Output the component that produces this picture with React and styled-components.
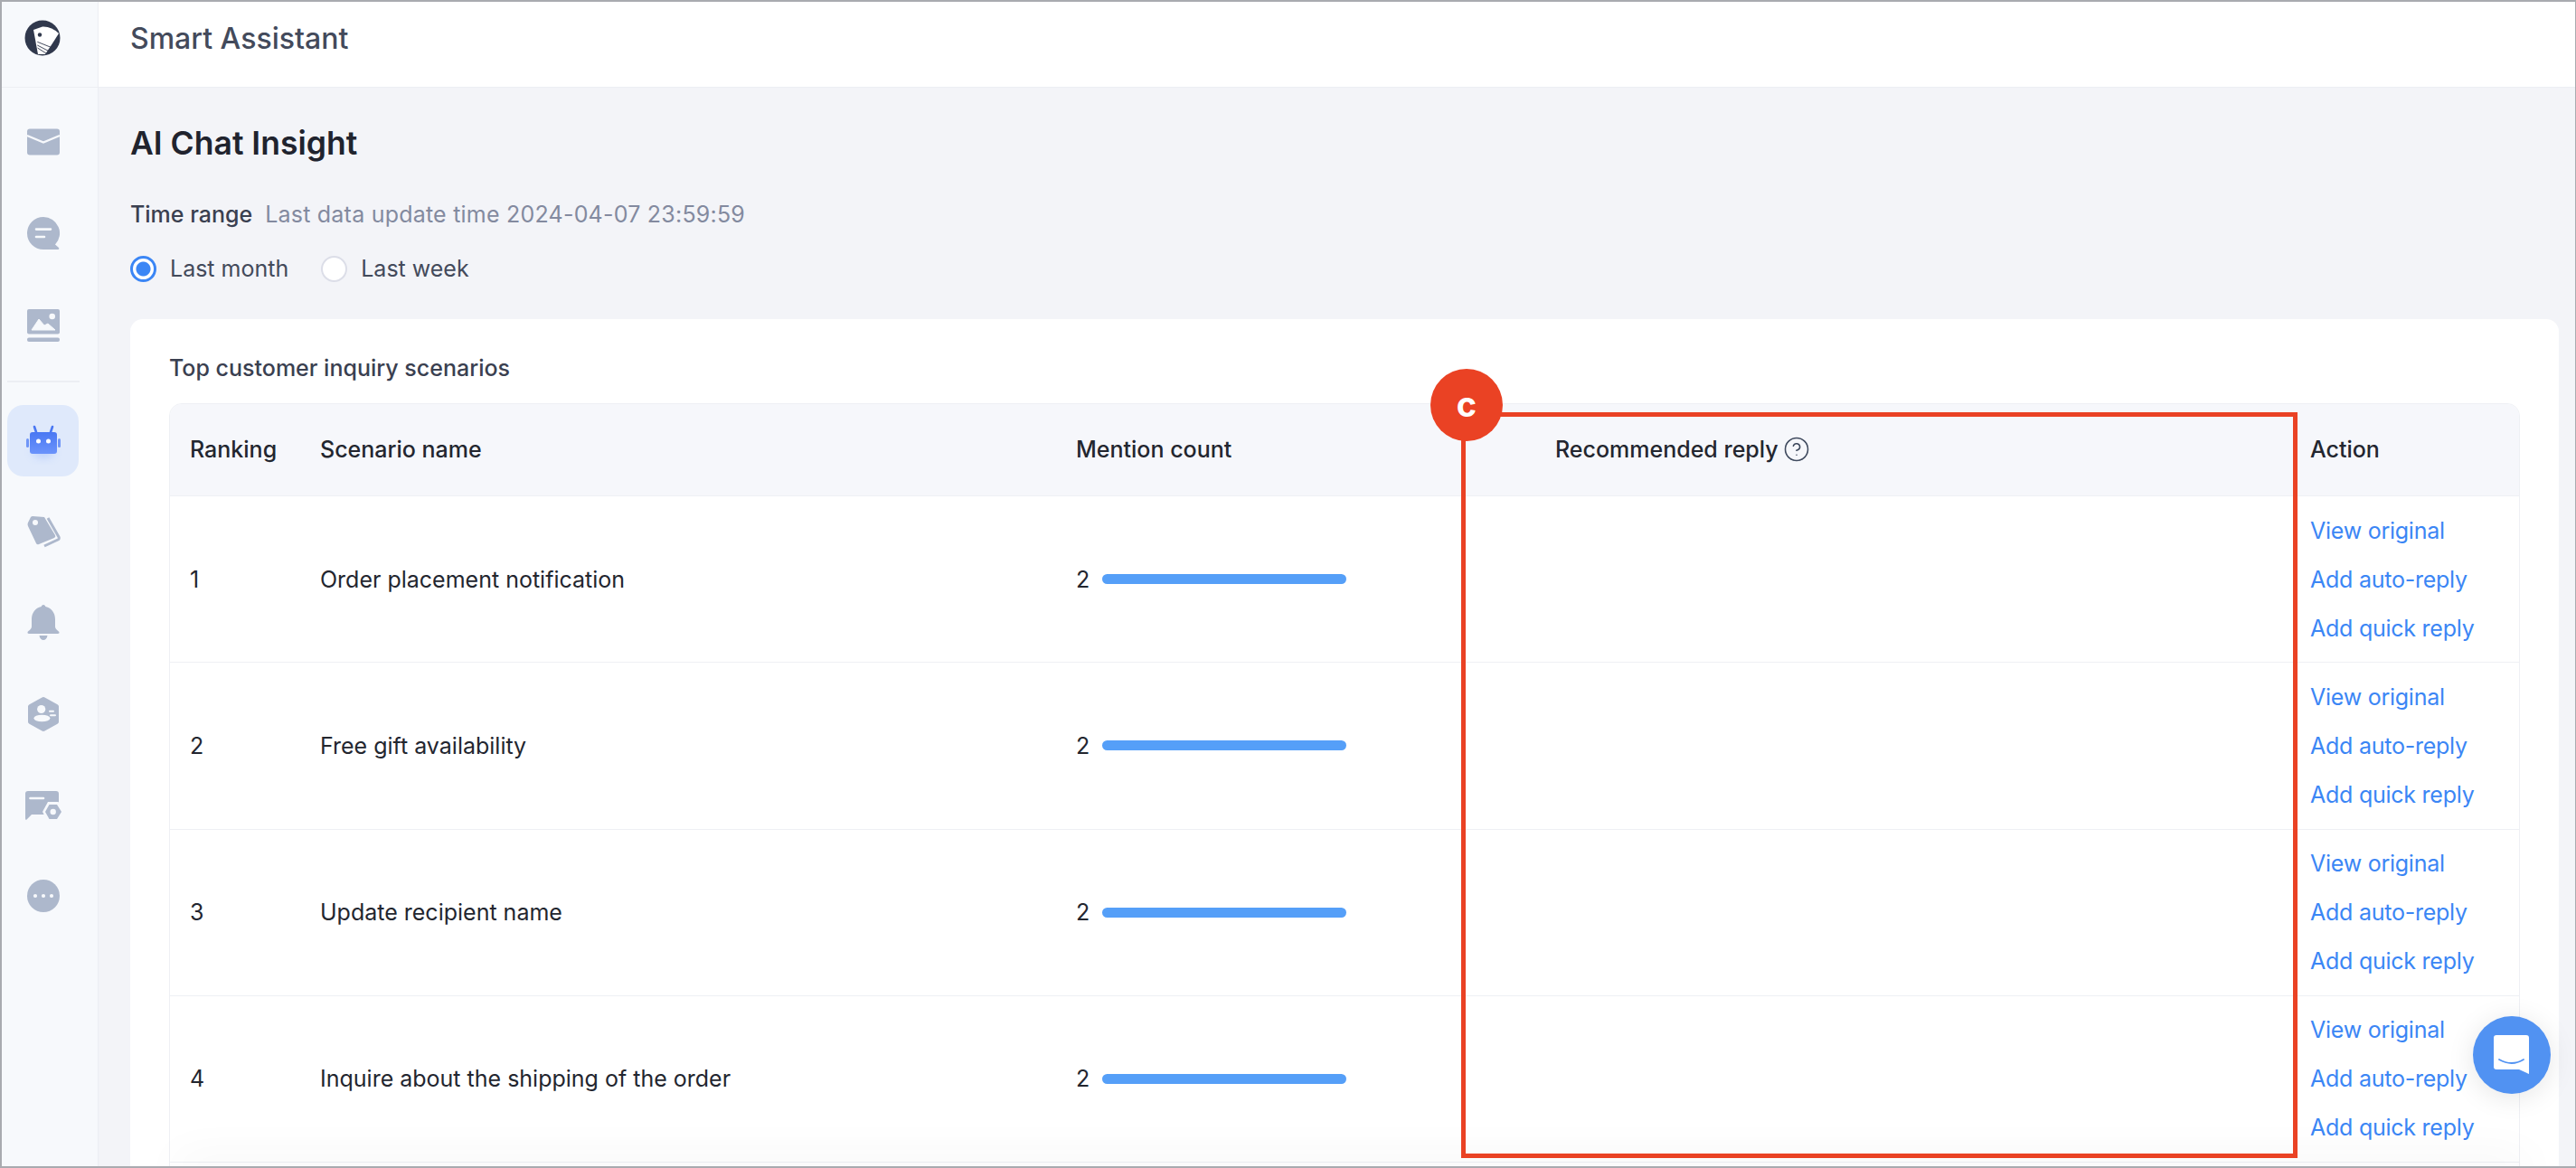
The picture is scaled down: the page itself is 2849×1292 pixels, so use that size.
import React from "react";
import styled, { createGlobalStyle } from "styled-components";
import { CircleHelp } from "lucide-react";

const Global = createGlobalStyle`
  html, body { margin: 0; padding: 0; background: #fff; }
  #root { width: 2849px; height: 1292px; overflow: hidden; }
  * { box-sizing: border-box; }
`;

const Frame = styled.div`
  position: relative;
  display: flex;
  width: 2849px;
  height: 1292px;
  overflow: hidden;
  border: solid #a9abb0;
  border-width: 2px 1px 2px 2px;
  font-family: Inter, "Noto Sans", sans-serif;
  color: #23262f;
`;

const Rail = styled.nav`
  flex: none;
  width: 107px;
  display: flex;
  flex-direction: column;
  background: #f7f9fc;
  border-right: 1px solid #eceef3;
`;

const RailLogo = styled.div`
  height: 95px;
  display: flex;
  align-items: center;
  justify-content: center;
  padding: 0 16px 14px 0;
  border-bottom: 1px solid #eceef3;
`;

const RailGroup = styled.div`
  display: flex;
  flex-direction: column;
  gap: ${(p) => p.$gap}px;
  padding: ${(p) => p.$top || 0}px 20px 0 6px;
`;

const RailItem = styled.div`
  width: 79px;
  height: 79px;
  display: flex;
  align-items: center;
  justify-content: center;
  border-radius: 18px;
  background: ${(p) => (p.$active ? "#dfe9fb" : "transparent")};
`;

const RailDivider = styled.div`
  height: 2px;
  margin: 22px 20px 25px 6px;
  background: #eceef3;
`;

const Content = styled.div`
  flex: 1;
  min-width: 0;
  display: flex;
  flex-direction: column;
  background: #f3f4f8;
`;

const TopBar = styled.header`
  flex: none;
  height: 95px;
  padding: 21px 35px 0;
  background: #fff;
  border-bottom: 1px solid #eceef3;
  font-size: 32px;
  line-height: 40px;
  font-weight: 500;
  color: #434a5b;
`;

const Main = styled.main`
  flex: 1;
  min-height: 0;
  padding: 41px 18px 0 35px;
  display: flex;
  flex-direction: column;
`;

const PageTitle = styled.h1`
  margin: 0;
  font-size: 35.5px;
  line-height: 42px;
  font-weight: 600;
  color: #20232e;
`;

const RangeLine = styled.div`
  margin-top: 39px;
  display: flex;
  gap: 14px;
  font-size: 25px;
  line-height: 36px;
`;

const RangeLabel = styled.span`
  color: #3a4050;
  font-weight: 500;
`;

const RangeHint = styled.span`
  color: #838a9f;
  letter-spacing: 0.22px;
`;

const RadioRow = styled.div`
  margin-top: 24px;
  display: flex;
  gap: 36px;
  height: 36px;
`;

const RadioOption = styled.label`
  display: flex;
  align-items: center;
  gap: 15px;
  font-size: 25px;
  line-height: 36px;
  color: #434a5b;
`;

const RadioMark = styled.span`
  width: 29px;
  height: 29px;
  border-radius: 50%;
  background: ${(p) => (p.$on ? "radial-gradient(circle, #3b86f5 0 7.5px, #fff 8.5px)" : "#fff")};
  border: ${(p) => (p.$on ? "3px solid #3b86f5" : "2.5px solid #dcdee8")};
`;

const Card = styled.section`
  flex: 1;
  margin-top: 38px;
  padding: 36px 43px 0;
  background: #fff;
  border-radius: 14px 14px 0 0;
`;

const CardTitle = styled.h2`
  margin: 0 0 21px;
  font-size: 25px;
  line-height: 36px;
  font-weight: 500;
  color: #3a4050;
`;

const Table = styled.div`
  min-height: 1000px;
  border: 1px solid #eef0f4;
  border-radius: 14px 14px 0 0;
  overflow: hidden;
`;

const Row = styled.div`
  display: grid;
  grid-template-columns: 144px 836px 530px 835px 1fr;
  align-items: center;
  height: ${(p) => (p.$head ? "102px" : "184.25px")};
  padding-bottom: ${(p) => (p.$head ? "2px" : "0")};
  background: ${(p) => (p.$head ? "#f6f7fb" : "#fff")};
  border-bottom: 1px solid #eef0f4;
  font-size: 25px;
  font-weight: ${(p) => (p.$head ? 500 : 400)};
  color: #23262f;
`;

const Cell = styled.div`
  padding-left: 22px;
  display: flex;
  align-items: center;
  gap: ${(p) => p.$gap || 0}px;
`;

const ActionCell = styled.div`
  padding-left: 22px;
  display: flex;
  flex-direction: column;
  gap: 18px;
  line-height: 36px;
  letter-spacing: -0.25px;
  color: #3b86f5;
`;

const Bar = styled.div`
  width: 270px;
  height: 11px;
  border-radius: 6px;
  background: #559ff8;
`;

const BottomFade = styled.div`
  position: absolute;
  left: 200px;
  right: 60px;
  bottom: -6px;
  height: 6px;
  box-shadow: 0 0 50px 8px rgba(0, 0, 0, 0.055);
`;

const Callout = styled.div`
  position: absolute;
  left: 1614px;
  top: 454px;
  width: 925px;
  height: 825px;
  border: 5px solid #ea4224;
`;

const CalloutBadge = styled.div`
  position: absolute;
  left: 1580px;
  top: 406px;
  width: 80px;
  height: 80px;
  display: flex;
  align-items: center;
  justify-content: center;
  border-radius: 50%;
  background: #ea4224;
  color: #fff;
  font-size: 38px;
  font-weight: 700;
  line-height: 1;
  padding-bottom: 2px;
`;

const ChatButton = styled.div`
  position: absolute;
  right: 27px;
  bottom: 80px;
  width: 86px;
  height: 86px;
  display: flex;
  align-items: center;
  justify-content: center;
  border-radius: 50%;
  background: #5192f2;
  box-shadow: 0 4px 30px rgba(0, 0, 0, 0.1);
`;

const C = "#adb8cc";
const BG = "#f7f9fc";

const Ic = ({ children, size = 48 }) => (
  <svg width={size} height={size} viewBox={`${-size / 2} ${-size / 2} ${size} ${size}`}>{children}</svg>
);

const LogoIcon = () => (
  <Ic>
    <defs>
      <clipPath id="logoDisc"><circle r="19.5" /></clipPath>
    </defs>
    <circle r="19.5" fill="#30384c" />
    <path d="M-10 -9 L0 -12.5 Q10 -13 18 -5 L11 6 L3 18 L-5 18 Z" fill="#fff" clipPath="url(#logoDisc)" />
    <circle cx="-3" cy="-3.5" r="2.2" fill="#30384c" />
    <path d="M-5.7 4.3 L11 11 M-5.7 8 L7.7 15 M-5.5 11 L4 17" stroke="#30384c" strokeWidth="0.9" />
  </Ic>
);
const MailIcon = () => (
  <Ic>
    <rect x="-18" y="-14.5" width="36" height="29" rx="3" fill={C} />
    <path d="M-18 -7 L0 0.5 L18 -7" fill="none" stroke={BG} strokeWidth="2.4" />
  </Ic>
);
const ChatIcon = () => (
  <Ic>
    <path d="M0 -18 A18 18 0 0 1 13 12.5 L17 16 Q18 18 16 18 L0 18 A18 18 0 0 1 0 -18 Z" fill={C} />
    <path d="M-8 -4.4 H8 M-8 4 H1" stroke={BG} strokeWidth="2.6" strokeLinecap="round" />
  </Ic>
);
const ImageIcon = () => (
  <Ic>
    <rect x="-18" y="-18" width="36" height="27.6" rx="2" fill={C} />
    <rect x="-18" y="13.5" width="36" height="4.5" rx="2" fill={C} />
    <circle cx="9.7" cy="-10" r="3.3" fill={BG} />
    <path d="M-13 5 L-5 -7 L1 0 L5 -2 L13 5 Z" fill={BG} stroke={BG} strokeLinejoin="round" />
  </Ic>
);
const BotIcon = () => (
  <Ic size={60}>
    <defs>
      <filter id="glow" x="-50%" y="-50%" width="200%" height="200%">
        <feGaussianBlur stdDeviation="5" />
      </filter>
      <linearGradient id="botFill" x1="0" y1="0" x2="0" y2="1">
        <stop offset="0" stopColor="#4a78f3" />
        <stop offset="1" stopColor="#6b93fb" />
      </linearGradient>
    </defs>
    <ellipse cy="12" rx="12" ry="7" fill="#8fb0fb" opacity="0.4" filter="url(#glow)" />
    <rect x="-15" y="-10" width="30" height="24" rx="3" fill="url(#botFill)" />
    <rect x="-19" y="-3" width="3" height="10" rx="1.5" fill="#6f95f7" />
    <rect x="16" y="-3" width="3" height="10" rx="1.5" fill="#6f95f7" />
    <path d="M-8 -10 L-10 -16 M8 -10 L10 -16" stroke="#4a78f3" strokeWidth="2.6" strokeLinecap="round" />
    <circle cx="-5.5" cy="0" r="2.5" fill="#fff" />
    <circle cx="5.5" cy="0" r="2.5" fill="#fff" />
  </Ic>
);
const TagIcon = () => (
  <Ic>
    <path d="M-12 -17 L1 -16 L13 4 Q14 6 12 7 L-5 14 Q-7 15 -8 13 L-17 -6 Q-18 -8 -17 -10 L-14 -16 Q-13 -17 -12 -17 Z" fill={C} />
    <circle cx="-9" cy="-10" r="3" fill={BG} />
    <path d="M5 -15 L17 6 Q18 8 16 9 L1 16" fill="none" stroke={C} strokeWidth="3" />
  </Ic>
);
const BellIcon = () => (
  <Ic>
    <g transform="translate(0 -1)">
      <path d="M0 -19 C1.5 -19 2 -18 2.3 -17 C9 -15.5 13 -10 13 -3 L13 5 C13 8 16 9.5 17.5 11 Q18 13 16 13 L-16 13 Q-18 13 -17.5 11 C-16 9.5 -13 8 -13 5 L-13 -3 C-13 -10 -9 -15.5 -2.3 -17 C-2 -18 -1.5 -19 0 -19 Z" fill={C} />
      <path d="M-4.5 15 H4.5 C4 18.5 2 20 0 20 C-2 20 -4 18.5 -4.5 15 Z" fill={C} />
    </g>
  </Ic>
);
const HexIcon = () => (
  <Ic>
    <path d="M-1.5 -18.5 Q0 -19.3 1.5 -18.5 L15.5 -10.8 Q17 -10 17 -8.5 L17 8.5 Q17 10 15.5 10.8 L1.5 18.5 Q0 19.3 -1.5 18.5 L-15.5 10.8 Q-17 10 -17 8.5 L-17 -8.5 Q-17 -10 -15.5 -10.8 Z" fill={C} />
    <circle cx="-2.3" cy="-5.5" r="4.6" fill={BG} />
    <ellipse cx="-1.6" cy="4.5" rx="9" ry="3.8" fill={BG} />
    <path d="M7 -3.3 H11 M8 1.3 H13" stroke={BG} strokeWidth="2" strokeLinecap="round" />
  </Ic>
);
const CardIcon = () => (
  <Ic>
    <path d="M-17 -16 H14 Q17 -16 17 -13 L17 10 H-13 L-19 16 Q-20 16 -20 14 L-20 -13 Q-20 -16 -17 -16 Z" fill={C} />
    <path d="M-14.5 -8 H0" stroke={BG} strokeWidth="2.6" strokeLinecap="round" />
    <path d="M5 -4 H16.5 L23 7 L16.5 18 H5 L-1 7 Z" fill={BG} />
    <path d="M6.5 -1 H15 L20 7 L15 15 H6.5 L2 7 Z" fill={C} />
    <circle cx="10.7" cy="7" r="3.2" fill={BG} />
  </Ic>
);
const MoreIcon = () => (
  <Ic>
    <circle r="18" fill={C} />
    <circle cx="-9" r="2.1" fill={BG} />
    <circle r="2.1" fill={BG} />
    <circle cx="9" r="2.1" fill={BG} />
  </Ic>
);
const BubbleIcon = () => (
  <svg width="46" height="48" viewBox="-23 -24 46 48">
    <path d="M-17 -22 H16 Q19 -22 19 -19 L19 21 L8 16 H-17 Q-20 16 -20 13 L-20 -19 Q-20 -22 -17 -22 Z" fill="#fff" />
    <path d="M-14 5 Q0 13 13 5" fill="none" stroke="#5192f2" strokeWidth="1.8" strokeLinecap="round" />
  </svg>
);

const topNav = [MailIcon, ChatIcon, ImageIcon];
const lowerNav = [BotIcon, TagIcon, BellIcon, HexIcon, CardIcon, MoreIcon];
const scenarios = [
  "Order placement notification",
  "Free gift availability",
  "Update recipient name",
  "Inquire about the shipping of the order",
];
const actions = ["View original", "Add auto-reply", "Add quick reply"];

export default function App() {
  return (
    <>
      <Global />
      <Frame>
        <Rail>
          <RailLogo><LogoIcon /></RailLogo>
          <RailGroup $gap={22.5} $top={20}>
            {topNav.map((I, i) => <RailItem key={i}><I /></RailItem>)}
          </RailGroup>
          <RailDivider />
          <RailGroup $gap={21.75}>
            {lowerNav.map((I, i) => <RailItem key={i} $active={i === 0}><I /></RailItem>)}
          </RailGroup>
        </Rail>
        <Content>
          <TopBar>Smart Assistant</TopBar>
          <Main>
            <PageTitle>AI Chat Insight</PageTitle>
            <RangeLine>
              <RangeLabel>Time range</RangeLabel>
              <RangeHint>Last data update time 2024-04-07 23:59:59</RangeHint>
            </RangeLine>
            <RadioRow>
              <RadioOption><RadioMark $on />Last month</RadioOption>
              <RadioOption><RadioMark />Last week</RadioOption>
            </RadioRow>
            <Card>
              <CardTitle>Top customer inquiry scenarios</CardTitle>
              <Table>
                <Row $head>
                  <Cell>Ranking</Cell>
                  <Cell>Scenario name</Cell>
                  <Cell>Mention count</Cell>
                  <Cell $gap={5}>Recommended reply <CircleHelp size={30} strokeWidth={1.25} color="#3f4a5e" /></Cell>
                  <Cell>Action</Cell>
                </Row>
                {scenarios.map((name, i) => (
                  <Row key={name}>
                    <Cell>{i + 1}</Cell>
                    <Cell>{name}</Cell>
                    <Cell $gap={14}>2<Bar /></Cell>
                    <Cell />
                    <ActionCell>
                      {actions.map((a) => <span key={a}>{a}</span>)}
                    </ActionCell>
                  </Row>
                ))}
              </Table>
            </Card>
          </Main>
        </Content>
        <BottomFade />
        <Callout />
        <CalloutBadge>c</CalloutBadge>
        <ChatButton><BubbleIcon /></ChatButton>
      </Frame>
    </>
  );
}
